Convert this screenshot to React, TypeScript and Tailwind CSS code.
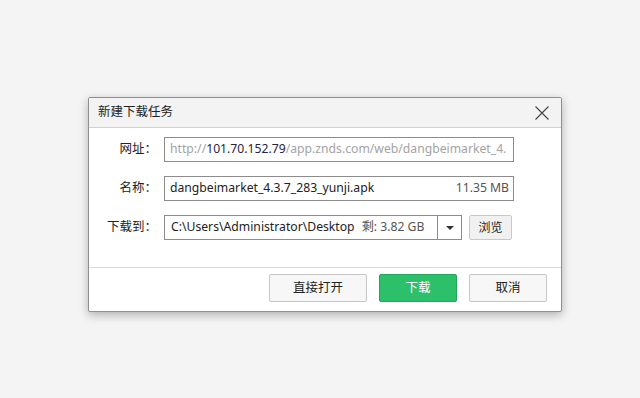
import React from 'react';

const font = { fontFamily: '"Noto Sans", "Noto Sans CJK SC", sans-serif' };

const CloseIcon = () => (
  <svg width="14" height="14" viewBox="0 0 14 14" className="block">
    <path d="M0.5 0.5 L13.5 13.5 M13.5 0.5 L0.5 13.5" stroke="#444" strokeWidth="1.1" fill="none" />
  </svg>
);

const Row = ({ label, children }: { label: string; children: React.ReactNode }) => (
  <div className="flex items-center h-[25px]">
    <div className="w-[75px] text-right pr-[7px] text-[12.5px] text-[#222]">{label}</div>
    <div className="flex items-center">{children}</div>
  </div>
);

export default function App() {
  return (
    <div className="w-full h-[398px] bg-[#f4f4f4] pt-[97px] pl-[88px]" style={font}>
      <div className="w-[474px] bg-white border border-[#8f8f8f] rounded-[2px] shadow-[0_3px_10px_rgba(0,0,0,0.28)] overflow-hidden">
        {/* title */}
        <div className="h-[30px] bg-[#f3f3f3] border-b border-[#d2d2d2] flex items-center justify-between pl-[9px] pr-[12px]">
          <span className="text-[12.5px] text-[#222]">新建下载任务</span>
          <CloseIcon />
        </div>

        {/* body */}
        <div className="pt-[9px] pb-[27px] flex flex-col gap-[14px]">
          <Row label="网址：">
            <div className="w-[350px] h-[25px] border border-[#8c8c8c] flex items-center px-[5px] text-[12.2px] whitespace-nowrap overflow-hidden">
              <span className="text-[#a3a3a3]">http://</span>
              <span className="text-[#2a2440]">101.70.152.79</span>
              <span className="text-[#a3a3a3]">/app.znds.com/web/dangbeimarket_4.</span>
            </div>
          </Row>
          <Row label="名称：">
            <div className="w-[350px] h-[25px] border border-[#8c8c8c] flex items-center justify-between pl-[5px] pr-[4px] text-[12.2px] whitespace-nowrap">
              <span className="text-[#222]">dangbeimarket_4.3.7_283_yunji.apk</span>
              <span className="text-[#555]">11.35 MB</span>
            </div>
          </Row>
          <Row label="下载到：">
            <div className="w-[298px] h-[25px] border border-[#8c8c8c] flex items-center text-[12.2px] whitespace-nowrap">
              <div className="flex-1 flex items-center pl-[6px] overflow-hidden">
                <span className="text-[#222]">C:\Users\Administrator\Desktop</span>
                <span className="text-[#555] ml-[7px]">剩: 3.82 GB</span>
              </div>
              <div className="w-[24px] h-full border-l border-[#8c8c8c] flex items-center justify-center">
                <svg width="8" height="4" viewBox="0 0 8 4" className="block">
                  <path d="M0 0 L8 0 L4 4 Z" fill="#333" />
                </svg>
              </div>
            </div>
            <button className="ml-[7px] w-[43px] h-[25px] bg-[#f1f1f1] border border-[#c9c9c9] rounded-[2px] text-[12px] text-[#222] flex items-center justify-center">
              浏览
            </button>
          </Row>
        </div>

        {/* footer */}
        <div className="border-t border-[#dcdcdc] pt-[6px] pb-[9px] pr-[14px] flex justify-end gap-[12px]">
          <button className="w-[98px] h-[28px] bg-[#f7f7f7] border border-[#c6c6c6] rounded-[2px] text-[12.5px] text-[#222]">
            直接打开
          </button>
          <button className="w-[78px] h-[28px] bg-[#2dc06b] border border-[#24a65a] rounded-[2px] text-[12.5px] text-white">
            下载
          </button>
          <button className="w-[78px] h-[28px] bg-[#f7f7f7] border border-[#c6c6c6] rounded-[2px] text-[12.5px] text-[#222]">
            取消
          </button>
        </div>
      </div>
    </div>
  );
}
